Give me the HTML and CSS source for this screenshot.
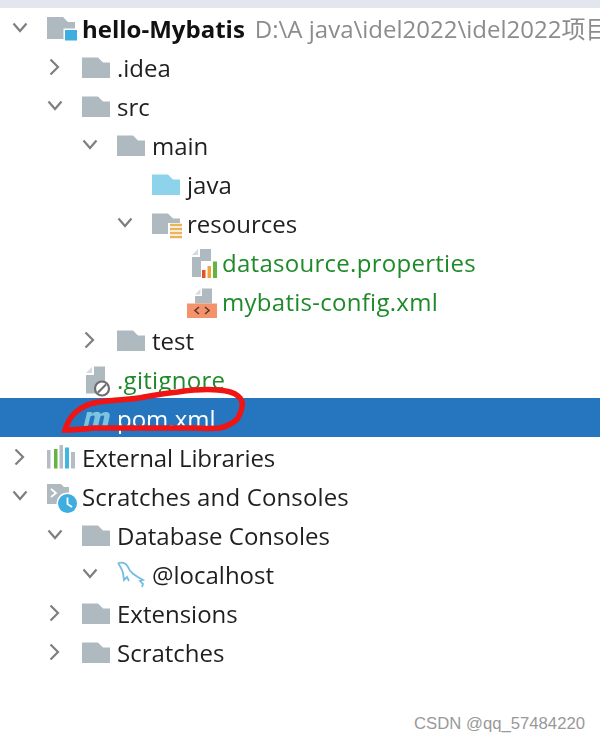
FILE: index.html
```html
<!DOCTYPE html>
<html lang="en">
<head>
    <meta charset="UTF-8">
    <meta name="viewport" content="width=device-width, initial-scale=1.0">
    <title>Project Tree</title>
    <link rel="stylesheet" href="styles.css">
</head>
<body>
    <svg class="defs" xmlns="http://www.w3.org/2000/svg">
        <symbol id="down" viewBox="0 0 16 16"><path d="M1.500 3.500 8 11l6.500-7.500"/></symbol>
        <symbol id="right" viewBox="0 0 16 16"><path d="M3.500 .5 11 8l-7.500 7.500"/></symbol>
        <symbol id="folder" viewBox="0 0 30 30"><path d="M0 5.500h16l5 5h7v15.500H0z"/></symbol>
    </svg>

    <div class="top-strip"></div>

    <div class="tree">
        <div class="row">
            <span class="twist"><svg><use href="#down"/></svg></span>
            <span class="icon">
                <svg viewBox="0 0 30 30">
                    <path class="gray" d="M0 4h16l5 5h7v17H0z"/>
                    <rect x="16.500" y="15.500" width="14" height="12" fill="#fff"/>
                    <rect x="18" y="17" width="12" height="10.500" fill="#3eaee0"/>
                </svg>
            </span>
            <span class="label bold">hello-Mybatis</span>
            <span class="path">D:\A java\idel2022\idel2022项目</span>
        </div>

        <div class="row lvl-1">
            <span class="twist"><svg><use href="#right"/></svg></span>
            <span class="icon"><svg class="gray"><use href="#folder"/></svg></span>
            <span class="label">.idea</span>
        </div>
        <div class="row lvl-1">
            <span class="twist"><svg><use href="#down"/></svg></span>
            <span class="icon"><svg class="gray"><use href="#folder"/></svg></span>
            <span class="label">src</span>
        </div>
        <div class="row lvl-2">
            <span class="twist"><svg><use href="#down"/></svg></span>
            <span class="icon"><svg class="gray"><use href="#folder"/></svg></span>
            <span class="label">main</span>
        </div>
        <div class="row lvl-3">
            <span class="twist"></span>
            <span class="icon"><svg class="sky"><use href="#folder"/></svg></span>
            <span class="label">java</span>
        </div>
        <div class="row lvl-3">
            <span class="twist"><svg><use href="#down"/></svg></span>
            <span class="icon">
                <svg viewBox="0 0 30 30">
                    <path class="gray" d="M0 5.500h16l5 5h7v15.500H0z"/>
                    <rect x="16" y="15" width="15" height="16" fill="#fff"/>
                    <path d="M18 17h12M18 21h12M18 25h12M18 29h12" stroke="#e8b45f" stroke-width="2.500"/>
                </svg>
            </span>
            <span class="label">resources</span>
        </div>
        <div class="row lvl-4">
            <span class="twist"></span>
            <span class="icon">
                <svg viewBox="0 0 30 30">
                    <path class="gray" d="M13 2h11v28H5V10h8z"/>
                    <path fill="#d5dade" d="M5 8l6-6v6z"/>
                    <rect x="14" y="14" width="17" height="17" fill="#fff"/>
                    <rect x="15" y="23" width="3.500" height="8" fill="#e2531f"/>
                    <rect x="20.500" y="19" width="3.500" height="12" fill="#eda53a"/>
                    <rect x="26" y="14.500" width="4" height="16.500" fill="#62b543"/>
                </svg>
            </span>
            <span class="label green">datasource.properties</span>
        </div>
        <div class="row lvl-4">
            <span class="twist"></span>
            <span class="icon">
                <svg viewBox="0 0 30 30">
                    <path class="gray" d="M15 2.500h10v15H8V10h7z"/>
                    <path fill="#d5dade" d="M8 8.500l5.500-5.500v5.500z"/>
                    <rect x="0" y="17.500" width="30" height="14.500" fill="#f4926b"/>
                    <path d="M12 21l-4 3.500 4 3.500M18 21l4 3.500-4 3.500" fill="none" stroke="#5a3a2e" stroke-width="1.600"/>
                </svg>
            </span>
            <span class="label green">mybatis-config.xml</span>
        </div>
        <div class="row lvl-2">
            <span class="twist"><svg><use href="#right"/></svg></span>
            <span class="icon"><svg class="gray"><use href="#folder"/></svg></span>
            <span class="label">test</span>
        </div>
        <div class="row lvl-1">
            <span class="twist"></span>
            <span class="icon">
                <svg viewBox="0 0 30 30">
                    <path class="gray" d="M12 2.500h11v27H4V11h8z"/>
                    <path fill="#d5dade" d="M4 9l6-6v6z"/>
                    <circle cx="20" cy="24.500" r="7" fill="#fff" stroke="#6e6e6e" stroke-width="2.200"/>
                    <path d="M16 28.500l8-8" stroke="#6e6e6e" stroke-width="2.200"/>
                </svg>
            </span>
            <span class="label green">.gitignore</span>
        </div>
        <div class="row lvl-1 selected">
            <span class="twist"></span>
            <span class="icon">
                <svg viewBox="0 0 30 30">
                    <path fill="#7cc4e0" d="M1 27 5 9h5l-.3 2c3-3 8-3 9 0 3-3 10-3 9 2l-3 14h-5.500l3-13c.3-2-3-2-4 0l-3 13h-5.500l3-13c.3-2-3-2-4.500 0l-3 13z"/>
                </svg>
            </span>
            <span class="label">pom.xml</span>
        </div>
        <div class="row">
            <span class="twist"><svg><use href="#right"/></svg></span>
            <span class="icon">
                <svg viewBox="0 0 30 30">
                    <rect x="0" y="8" width="3.500" height="18.500" fill="#b4bdc4"/>
                    <rect x="7" y="7" width="3.500" height="19.500" fill="#62b543"/>
                    <rect x="12.500" y="3" width="3.500" height="23.500" fill="#b4bdc4"/>
                    <rect x="18" y="5.500" width="4" height="21" fill="#40b6e0"/>
                    <rect x="24" y="10" width="4" height="16.500" fill="#b4bdc4"/>
                </svg>
            </span>
            <span class="label tight">External Libraries</span>
        </div>
        <div class="row">
            <span class="twist"><svg><use href="#down"/></svg></span>
            <span class="icon">
                <svg viewBox="0 0 30 30">
                    <path class="gray" d="M0 3h14l3 3h5v17H0z"/>
                    <path d="M4 8l5 4-5 4" fill="none" stroke="#fff" stroke-width="1.800"/>
                    <circle cx="20.500" cy="22.500" r="11" fill="#fff"/>
                    <circle cx="20.500" cy="22.500" r="9.500" fill="#3eaee0"/>
                    <path d="M20.500 16.500v6.500l4.500 3" fill="none" stroke="#fff" stroke-width="1.800"/>
                </svg>
            </span>
            <span class="label wide">Scratches and Consoles</span>
        </div>
        <div class="row lvl-1">
            <span class="twist"><svg><use href="#down"/></svg></span>
            <span class="icon"><svg class="gray"><use href="#folder"/></svg></span>
            <span class="label">Database Consoles</span>
        </div>
        <div class="row lvl-2">
            <span class="twist"><svg><use href="#down"/></svg></span>
            <span class="icon">
                <svg viewBox="0 0 30 30">
                    <path d="M1 4C5 3 9 4 11 8 13 14 19 17 26 21L23 22 26 25 25 28M1 4C3 7 5 10 6 14L7 21 10 18 12 22" fill="none" stroke="#74bde3" stroke-width="1.800"/>
                </svg>
            </span>
            <span class="label">@localhost</span>
        </div>
        <div class="row lvl-1">
            <span class="twist"><svg><use href="#right"/></svg></span>
            <span class="icon"><svg class="gray"><use href="#folder"/></svg></span>
            <span class="label">Extensions</span>
        </div>
        <div class="row lvl-1">
            <span class="twist"><svg><use href="#right"/></svg></span>
            <span class="icon"><svg class="gray"><use href="#folder"/></svg></span>
            <span class="label">Scratches</span>
        </div>
    </div>

    <!-- hand drawn circle round pom.xml -->
    <svg class="scribble" viewBox="0 0 600 741">
        <path d="M65 430C67 423 70 417 76 412 82 407 88 404 94 403 102 401 110 401 118 400 128 399 136 399 144 397 155 395 166 393 178 392 192 390 206 389 218 390 228 391 234 392 238 396 243 400 243 406 241 411 239 416 238 420 232 423 228 426 225 427 220 428 210 429 202 428 194 428 178 428 160 428 144 428 126 428 110 428 94 428 84 429 74 430 65 430z"/>
    </svg>

    <div class="watermark">CSDN @qq_57484220</div>
</body>
</html>
```

FILE: styles.css
```css
body {
    margin: 0;
    background: #fff;
    font-family: "Open Sans", "Noto Sans CJK SC", sans-serif;
    font-size: 24px;
    color: #1f1f1f;
    overflow: hidden;
}

.defs {
    display: none;
}

.top-strip {
    height: 8px;
    background: #e3e6ef;
}

.tree {
    filter: blur(0.5px);
}

.row {
    display: flex;
    align-items: center;
    height: 39px;
    padding-left: 8px;
    white-space: nowrap;
    overflow: hidden;
}

.lvl-1 { padding-left: 43px; }
.lvl-2 { padding-left: 78px; }
.lvl-3 { padding-left: 113px; }
.lvl-4 { padding-left: 148px; }

.twist {
    flex: none;
    width: 39px;
    height: 16px;
}

.twist svg {
    display: block;
    width: 16px;
    height: 16px;
    margin-left: 4px;
    overflow: visible;
    fill: none;
    stroke: #7f7f7f;
    stroke-width: 2.2;
}

.icon {
    flex: none;
    width: 35px;
    height: 30px;
}

.icon svg {
    display: block;
    width: 30px;
    height: 30px;
    overflow: visible;
}

.gray {
    fill: #aeb9c0;
}

.sky {
    fill: #8ed3ec;
}

.label {
    padding-top: 2px;
    line-height: 37px;
}

.bold {
    font-weight: 700;
    color: #111;
}

.green {
    color: #1f8a2a;
    letter-spacing: 0.28px;
}

.tight {
    letter-spacing: -0.12px;
}

.wide {
    letter-spacing: 0.14px;
}

.path {
    margin-left: 10px;
    padding-top: 2px;
    line-height: 37px;
    color: #8c8c8c;
}

.selected {
    background: #2675bf;
    color: #fff;
}

.scribble {
    position: absolute;
    top: 0;
    left: 0;
    width: 600px;
    height: 741px;
    fill: none;
    stroke: #f01414;
    stroke-width: 5.5;
}

.watermark {
    position: absolute;
    top: 714px;
    right: 15px;
    font-family: "Liberation Sans", sans-serif;
    font-size: 16.700px;
    color: #999;
}
```
